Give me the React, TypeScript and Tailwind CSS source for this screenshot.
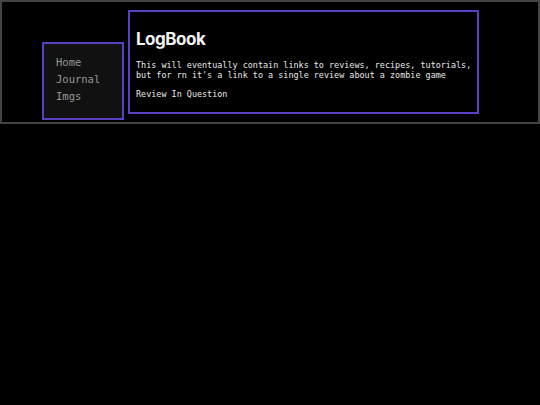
import React from "react";

export default function App() {
  return (
    <div className="w-[540px] h-[405px] bg-black overflow-hidden">
      <div className="h-[124px] border-2 border-[#444444] flex items-start">
        <nav className="ml-[40px] mt-[40px] w-[82px] h-[78px] border-2 border-[#5a3fc6] bg-[#111111] pl-[12px] pt-[10px] flex flex-col font-['DejaVu_Sans_Mono',monospace] text-[10.5px] leading-[17px] text-[#979797]">
          <span>Home</span>
          <span>Journal</span>
          <span>Imgs</span>
        </nav>
        <main className="ml-[4px] mt-[8px] w-[351px] h-[104px] border-2 border-[#5a3fc6] bg-black px-[6px] pt-[17px] text-[#e8e8e8] overflow-visible">
          <h1 className="font-['Inter',sans-serif] font-bold text-[17px] leading-[20px] tracking-[-0.5px] text-[#f2f2f2]">LogBook</h1>
          <p className="mt-[11px] whitespace-nowrap font-['DejaVu_Sans_Mono',monospace] text-[8.45px] leading-[10px]">
            This will eventually contain links to reviews, recipes, tutorials,
            <br />
            but for rn it's a link to a single review about a zombie game
          </p>
          <p className="mt-[9px] whitespace-nowrap font-['DejaVu_Sans_Mono',monospace] text-[8.45px] leading-[10px]">Review In Question</p>
        </main>
      </div>
    </div>
  );
}
